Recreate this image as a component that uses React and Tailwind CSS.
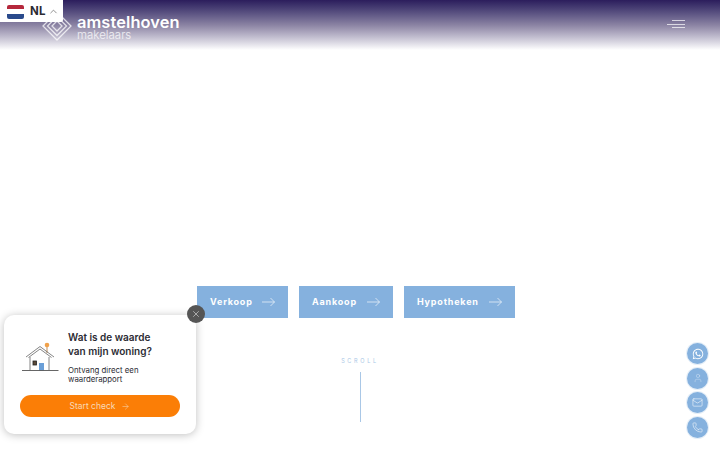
import React from "react";
import { FaWhatsapp } from "react-icons/fa";
import { User, Mail, Phone, X, ArrowRight, ChevronUp } from "lucide-react";

const font = { fontFamily: "Inter, 'Open Sans', sans-serif" };

function LongArrow() {
  return (
    <svg width="13" height="10" viewBox="0 0 13 10" fill="none" stroke="currentColor" strokeOpacity="0.8" strokeWidth="0.8" className="shrink-0">
      <path d="M0 5h12.5M8.5 1l4 4-4 4" />
    </svg>
  );
}

function Logo() {
  return (
    <svg width="30" height="30" viewBox="0 0 30 30" fill="none" stroke="#ffffff" strokeOpacity="0.75" strokeWidth="1.3">
      <path d="M15 1l14 14-14 14L1 15z" />
      <path d="M15 5.5L24.5 15 15 24.5 5.5 15z" />
      <path d="M15 10l5 5-5 5-5-5z" />
    </svg>
  );
}

function House() {
  return (
    <svg width="37" height="32" viewBox="0 0 37 32" fill="none">
      <path d="M25 6v7" stroke="#c9a27a" strokeWidth="1.2" />
      <circle cx="25" cy="5" r="2.3" fill="#f0a14a" />
      <path d="M4 17L18 6.5 32 17M6.5 17.5L18 9l11.5 8.5" stroke="#666" strokeWidth="0.8" />
      <path d="M8 17v13M27 17v13" stroke="#777" strokeWidth="0.9" />
      <rect x="11" y="21" width="3.5" height="4" fill="#5b4a3a" stroke="#222" strokeWidth="0.8" />
      <rect x="17" y="23" width="5" height="7.5" fill="#6a9fd8" />
      <path d="M0 30.5h36.5" stroke="#555" strokeWidth="0.9" />
    </svg>
  );
}

function CtaButton({ label, width }) {
  return (
    <a className={`flex h-[32px] items-center justify-between bg-[#85b1de] px-[13px] text-[9px] font-bold tracking-[0.8px] text-white ${width}`}>
      <span>{label}</span>
      <LongArrow />
    </a>
  );
}

function RoundIcon({ children }) {
  return (
    <div className="flex h-[21px] w-[21px] items-center justify-center rounded-full bg-[#85b1de] text-white ring-1 ring-[#e6eff8]">
      {children}
    </div>
  );
}

export default function App() {
  return (
    <div className="relative h-[450px] w-[720px] overflow-hidden bg-white" style={font}>
      <header className="flex h-[50px] items-start justify-between bg-gradient-to-b from-[#2c1d5c] via-[#8b83a3] to-white pl-[42px] pr-[35px]">
        <div className="flex items-center gap-[5px] pt-[9px]">
          <Logo />
          <div className="flex flex-col text-white">
            <span className="pt-[3px] text-[16.4px] font-semibold leading-[20px] tracking-[0.1px]">amstelhoven</span>
            <span className="mt-[-4px] text-[11.5px] font-light leading-[14px] text-white/80">makelaars</span>
          </div>
        </div>
        <div className="flex flex-col items-end gap-[2.5px] pt-[20px]">
          <span className="h-px w-[13px] bg-white/70" />
          <span className="h-px w-[18px] bg-white/70" />
          <span className="h-px w-[13px] bg-white/70" />
        </div>
      </header>

      {/* language picker */}
      <div className="absolute left-0 top-0 flex h-[22px] w-[63px] items-center rounded-br-[2px] bg-white pl-[7px] pt-[1px]">
        <div className="flex h-[14px] w-[17px] flex-col overflow-hidden rounded-[2px]">
          <span className="flex-1 bg-[#b5283c]" />
          <span className="flex-1 bg-white" />
          <span className="flex-1 bg-[#2a4a8c]" />
        </div>
        <span className="ml-[6px] text-[11.5px] font-bold leading-none tracking-[0.3px] text-[#2b2b33]">NL</span>
        <ChevronUp size={11} strokeWidth={1.4} className="ml-[2px] text-[#555]" />
      </div>

      <main className="flex flex-col items-center">
        <div className="mt-[236px] ml-[-8px] flex gap-[11px]">
          <CtaButton label="Verkoop" width="w-[91px]" />
          <CtaButton label="Aankoop" width="w-[94px]" />
          <CtaButton label="Hypotheken" width="w-[111px]" />
        </div>
        <span className="mt-[39px] text-[5.5px] leading-[8px] tracking-[2.7px] text-[#a9c7e6]">SCROLL</span>
        <span className="mt-[7px] h-[50px] w-px bg-[#a9c7e6]" />
      </main>

      {/* popup */}
      <div className="absolute left-[4px] top-[315px] h-[119px] w-[192px] rounded-[10px] bg-white px-[16px] pt-[15px] shadow-[0_1px_8px_rgba(0,0,0,0.25)]">
        <div className="flex">
          <div className="w-[48px] pl-[2px] pt-[10px]">
            <House />
          </div>
          <div className="text-[#2b2b33]">
            <p className="text-[10px] font-semibold leading-[14px]">Wat is de waarde<br />van mijn woning?</p>
            <p className="mt-[8px] text-[7.8px] leading-[9px]">Ontvang direct een<br />waarderapport</p>
          </div>
        </div>
        <div className="mt-[11px] flex h-[22px] items-center justify-center gap-[6px] rounded-full bg-[#fb7e06] text-[8.5px] text-[#f8d9b8]">
          <span>Start check</span>
          <ArrowRight size={9} strokeWidth={1.4} />
        </div>
      </div>
      <button className="absolute left-[187px] top-[305px] flex h-[18px] w-[18px] items-center justify-center rounded-full bg-[#555] text-white">
        <X size={10} strokeWidth={1.2} />
      </button>

      {/* contact buttons */}
      <div className="absolute left-[687px] top-[343px] flex flex-col gap-[3.6px]">
        <RoundIcon><FaWhatsapp size={12} /></RoundIcon>
        <RoundIcon><User size={10} strokeWidth={1} className="text-white/70" /></RoundIcon>
        <RoundIcon><Mail size={11} strokeWidth={1.2} /></RoundIcon>
        <RoundIcon><Phone size={11} strokeWidth={1.2} /></RoundIcon>
      </div>
    </div>
  );
}
